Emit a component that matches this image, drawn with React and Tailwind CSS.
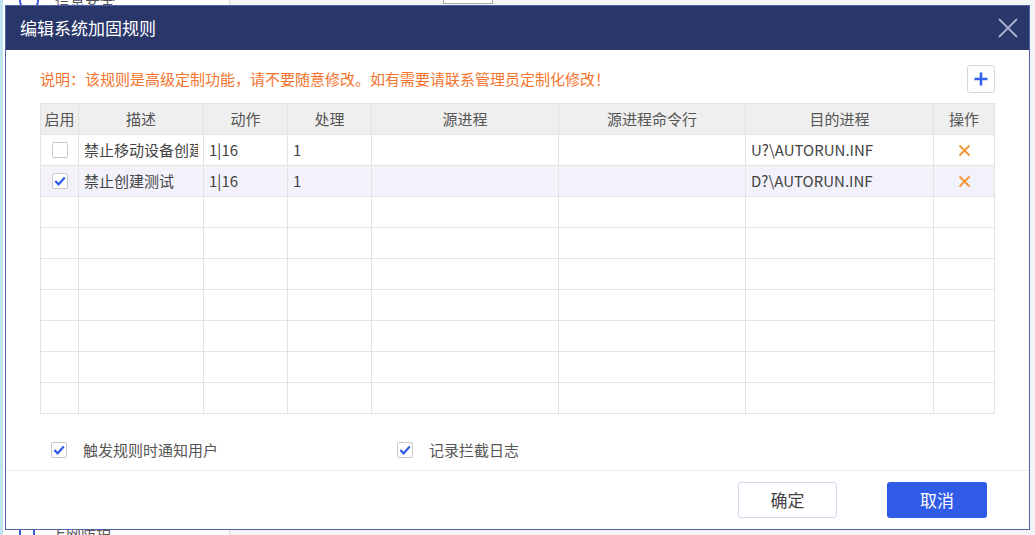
import React from "react";

const cols = "grid-cols-[38px_125px_84px_84px_187px_187px_188px_61px]";

const rows = [
  { on: false, desc: "禁止移动设备创建文件", act: "1|16", proc: "1", dst: "U?\\AUTORUN.INF" },
  { on: true, desc: "禁止创建测试", act: "1|16", proc: "1", dst: "D?\\AUTORUN.INF" },
];

function Check({ on }) {
  return (
    <span className="w-4 h-4 flex items-center justify-center border border-[#c9c9c9] rounded-[2px] bg-white shrink-0">
      {on && (
        <svg width="12" height="10" viewBox="0 0 12 10">
          <path d="M1.3 5 L4.6 8.3 L10.8 1.6" fill="none" stroke="#2f5be7" strokeWidth="2.2" />
        </svg>
      )}
    </span>
  );
}

function Cell({ children, center }) {
  return (
    <div
      className={
        "h-[31px] border-b border-r border-[#e3e3e3] flex items-center overflow-hidden whitespace-nowrap " +
        (center ? "justify-center" : "px-[5px]")
      }
    >
      {children}
    </div>
  );
}

export default function App() {
  const headers = ["启用", "描述", "动作", "处理", "源进程", "源进程命令行", "目的进程", "操作"];
  const empty = Array.from({ length: 7 });

  return (
    <div
      className="relative w-[1035px] h-[535px] bg-[#f3f4f6] overflow-hidden"
      style={{ fontFamily: '"Noto Sans CJK SC", "Noto Sans", sans-serif' }}
    >
      {/* background app fragments */}
      <div className="flex h-full">
        <div className="w-[230px] h-full bg-white border-r border-[#dcdcdc] border-l-[3px] border-l-[#bfe3ef] flex flex-col justify-between">
          <div className="flex items-center gap-4 px-4 -mt-[10px] text-[15px] text-[#555]">
            <span className="w-5 h-5 rounded-full border-2 border-[#3b5bdb]" />
            <span className="overflow-hidden">信息安全</span>
          </div>
          <div className="flex items-center gap-4 px-4 -mb-[10px] text-[15px] text-[#555]">
            <span className="w-4 h-4 border-2 border-[#3b5bdb]" />
            <span className="overflow-hidden">上网防护</span>
          </div>
        </div>
        <div className="flex-1 flex">
          <div className="ml-[213px] mt-[-4px] w-[50px] h-[8px] border border-[#aaa] bg-white" />
        </div>
      </div>

      {/* dialog */}
      <div className="absolute left-[5px] top-[5px] w-[1025px] h-[525px] bg-white border border-[#5260ad] flex flex-col">
        <div className="h-[44px] bg-[#29366a] flex items-center justify-between pl-[14px] pr-[10px] shrink-0">
          <span className="text-white text-[17px]">编辑系统加固规则</span>
          <svg width="22" height="22" viewBox="0 0 22 22">
            <path d="M2 2 L20 20 M20 2 L2 20" stroke="#a8aecb" strokeWidth="2" />
          </svg>
        </div>

        <div className="flex-1 px-[34px] pt-[15px]">
          <div className="flex items-center justify-between h-[28px]">
            <span className="text-[15px] text-[#f4742d]">
              说明：该规则是高级定制功能，请不要随意修改。如有需要请联系管理员定制化修改！
            </span>
            <button className="w-[28px] h-[28px] border border-[#d6d6d6] rounded-[3px] bg-white flex items-center justify-center">
              <svg width="16" height="16" viewBox="0 0 16 16">
                <path d="M8 1.5 V14.5 M1.5 8 H14.5" stroke="#3561ee" strokeWidth="2.6" />
              </svg>
            </button>
          </div>

          <div className="mt-[10px] w-[955px] border-l border-t border-[#e3e3e3] text-[15px] text-[#444]">
            <div className={"grid " + cols + " bg-[#efefef] text-[#555]"}>
              {headers.map((h) => (
                <Cell key={h} center>
                  {h}
                </Cell>
              ))}
            </div>
            {rows.map((r, i) => (
              <div key={i} className={"grid " + cols + " " + (i === 1 ? "bg-[#f3f2fa]" : "bg-white")}>
                <Cell center>
                  <Check on={r.on} />
                </Cell>
                <Cell>
                  <span className="block w-full overflow-hidden">{r.desc}</span>
                </Cell>
                <Cell>{r.act}</Cell>
                <Cell>{r.proc}</Cell>
                <Cell />
                <Cell />
                <Cell>{r.dst}</Cell>
                <Cell center>
                  <svg width="13" height="13" viewBox="0 0 13 13">
                    <path d="M1.5 1.5 L11.5 11.5 M11.5 1.5 L1.5 11.5" stroke="#f39437" strokeWidth="1.8" />
                  </svg>
                </Cell>
              </div>
            ))}
            {empty.map((_, i) => (
              <div key={"e" + i} className={"grid " + cols + " bg-white"}>
                {headers.map((h) => (
                  <Cell key={h} />
                ))}
              </div>
            ))}
          </div>

          <div className="flex items-center mt-[25px] pl-[11px] text-[15px] text-[#555]">
            <div className="flex items-center gap-4 w-[346px]">
              <Check on />
              <span>触发规则时通知用户</span>
            </div>
            <div className="flex items-center gap-4">
              <Check on />
              <span>记录拦截日志</span>
            </div>
          </div>
        </div>

        <div className="h-[59px] border-t border-[#ececec] flex items-center justify-end gap-[50px] pr-[42px] shrink-0">
          <button className="w-[99px] h-[36px] border border-[#d3d7ea] rounded-[3px] bg-white text-[17px] text-[#444]">
            确定
          </button>
          <button className="w-[100px] h-[36px] rounded-[3px] bg-[#2f5be7] text-[17px] text-white">
            取消
          </button>
        </div>
      </div>
    </div>
  );
}
